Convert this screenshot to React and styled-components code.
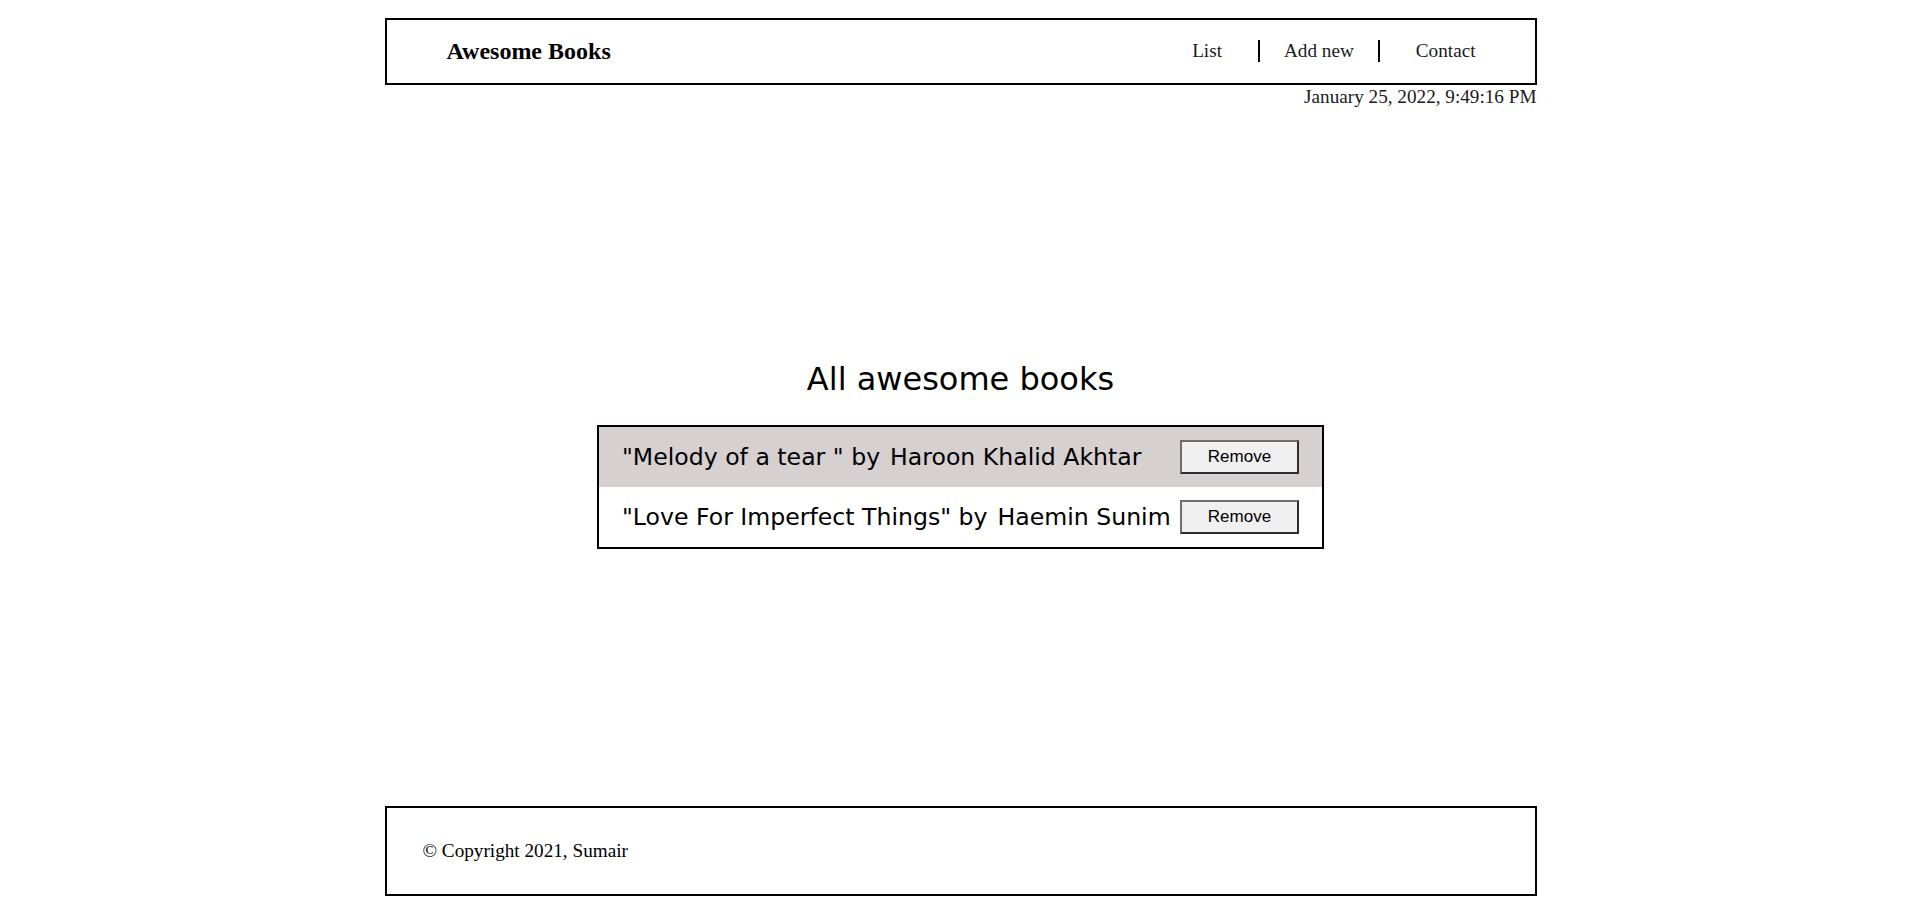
import React from "react";
import styled, { createGlobalStyle } from "styled-components";

const GlobalStyle = createGlobalStyle`
  html, body {
    margin: 0;
    padding: 0;
    background: #fff;
  }

  body {
    font-family: "Liberation Serif", "Times New Roman", serif;
    color: #000;
  }
`;

const Page = styled.div`
  min-height: 100vh;
  display: flex;
  flex-direction: column;
  box-sizing: border-box;
  padding: 18px 0 14px;
`;

const Frame = styled.div`
  width: 1152px;
  margin: 0 auto;
  box-sizing: border-box;
`;

const Header = styled.header`
  height: 67px;
  border: 2px solid #000;
  box-sizing: border-box;
  display: flex;
  align-items: center;
  justify-content: space-between;
  padding: 0 59px 0 60px;
`;

const Brand = styled.h2`
  margin: 0;
  font-size: 24px;
  font-weight: 700;
  line-height: normal;
`;

const Nav = styled.ul`
  list-style: none;
  margin: 0 0 2px;
  padding: 0;
  display: flex;
  align-items: center;
  gap: 36px;
`;

const NavItem = styled.li`
  font-size: 19.2px;
  line-height: 22px;
  color: #1a1a1a;
  padding: ${(p) => (p.divided ? "0 24px" : "0")};
  border-left: ${(p) => (p.divided ? "2px solid #000" : "none")};
  border-right: ${(p) => (p.divided ? "2px solid #000" : "none")};
  cursor: pointer;
`;

const DateLine = styled.p`
  margin: 0;
  text-align: right;
  font-size: 19.2px;
  line-height: 24px;
  color: #1a1a1a;
`;

const Main = styled.main`
  flex: 1;
  display: flex;
  flex-direction: column;
  align-items: center;
  justify-content: center;
  padding-bottom: 11px;
`;

const Heading = styled.h1`
  margin: 0 0 26px;
  padding-top: 3px;
  font-family: "Comic Sans MS", "DejaVu Sans", sans-serif;
  font-size: 32px;
  font-weight: 400;
  line-height: 40px;
  text-align: center;
`;

const BookList = styled.ul`
  list-style: none;
  margin: 0;
  padding: 0;
  width: 727px;
  box-sizing: border-box;
  border: 2px solid #000;
`;

const BookRow = styled.li`
  height: 60px;
  display: flex;
  align-items: center;
  justify-content: space-between;
  padding: 0 23px;
  background: ${(p) => (p.shaded ? "#d6d0d0" : "#fff")};
  font-family: "Comic Sans MS", "DejaVu Sans", sans-serif;
  font-size: 23.6px;
`;

const BookText = styled.p`
  margin: 0;
  white-space: nowrap;
`;

const Author = styled.span`
  margin-left: 10px;
`;

const RemoveButton = styled.button`
  width: 119px;
  height: 34px;
  box-sizing: border-box;
  background: #f0f0f0;
  border: 2px solid;
  border-color: #6e6e6e #2e2e2e #2e2e2e #6e6e6e;
  font-family: "Liberation Sans", Arial, sans-serif;
  font-size: 17px;
  color: #000;
  padding: 0;
  cursor: pointer;

  &:hover {
    opacity: 0.9;
  }
`;

const Footer = styled.footer`
  height: 90px;
  border: 2px solid #000;
  box-sizing: border-box;
  display: flex;
  align-items: center;
  padding-left: 36px;
  font-size: 19.2px;
`;

const books = [
  { title: "Melody of a tear ", author: "Haroon Khalid Akhtar" },
  { title: "Love For Imperfect Things", author: "Haemin Sunim" },
];

const App = () => {
  return (
    <>
      <GlobalStyle />
      <Page>
        <Frame>
          <Header>
            <Brand>Awesome Books</Brand>
            <Nav>
              <NavItem>List</NavItem>
              <NavItem divided>Add new</NavItem>
              <NavItem>Contact</NavItem>
            </Nav>
          </Header>
          <DateLine>January 25, 2022, 9:49:16 PM</DateLine>
        </Frame>

        <Main>
          <Heading>All awesome books</Heading>
          <BookList>
            {books.map((book, i) => (
              <BookRow key={book.title} shaded={i % 2 === 0}>
                <BookText>
                  "{book.title}" by<Author>{book.author}</Author>
                </BookText>
                <RemoveButton type="button">Remove</RemoveButton>
              </BookRow>
            ))}
          </BookList>
        </Main>

        <Frame>
          <Footer>© Copyright 2021, Sumair</Footer>
        </Frame>
      </Page>
    </>
  );
};

export default App;
